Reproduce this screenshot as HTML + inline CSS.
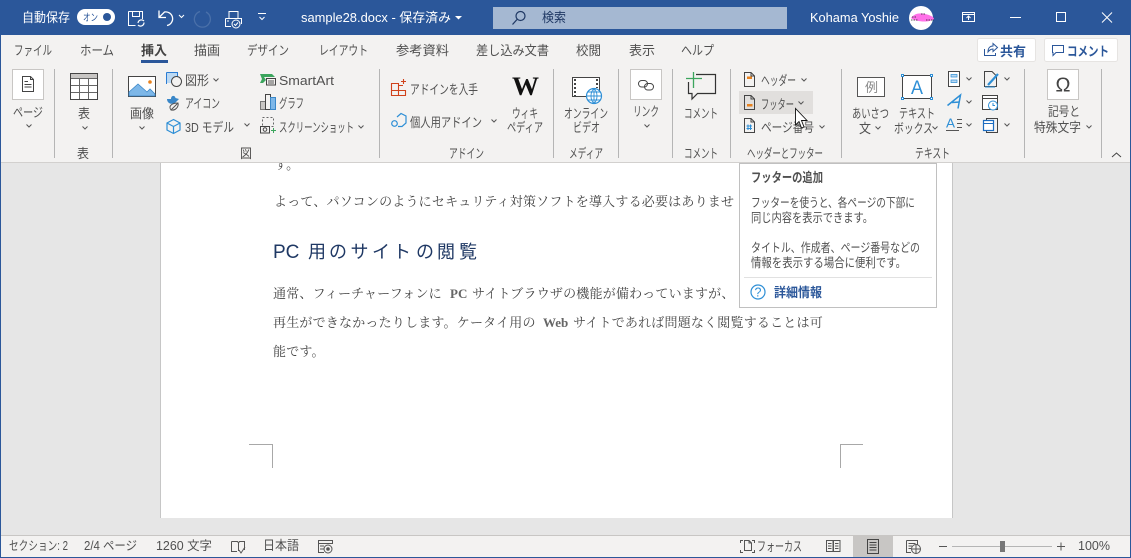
<!DOCTYPE html>
<html lang="ja"><head><meta charset="utf-8"><title>sample28.docx - Word</title>
<style>
html,body{margin:0;padding:0;background:#e6e6e6;overflow:hidden}
svg{display:block}
text{font-family:"Liberation Sans","Noto Sans CJK JP",sans-serif;font-size:13px;fill:#505050}
.w text,text.w{fill:#fff}
.m text{font-family:"Liberation Serif","Noto Serif CJK SC","Noto Serif CJK JP",serif;font-size:13px;letter-spacing:.2px;fill:#444}
.m tspan.e{font-weight:700;fill:#666;letter-spacing:0}
.i{fill:none;stroke:#444;stroke-width:1}
.c{fill:none;stroke:#555;stroke-width:1}
.b{fill:none;stroke:#2e8fd6;stroke-width:1.2}
.s{fill:#b5b5b5}
</style></head><body>
<svg xmlns="http://www.w3.org/2000/svg" width="1131" height="558" viewBox="0 0 1131 558">
<defs><path id="chev" d="M-2.500-1.500L0 1 2.500-1.500" fill="none" stroke="#555" stroke-width="1"/></defs>
<rect width="1131" height="558" fill="#e6e6e6"/>
<!-- document -->
<rect x="161" y="160" width="791" height="358" fill="#fff"/>
<path d="M160.500 160V518M952.500 160V518" stroke="#c6c6c6" fill="none"/>
<g class="m">
<text x="274" y="169">す。</text>
<text x="274" y="206">よって、パソコンのようにセキュリティ対策ソフトを導入する必要はありませ</text>
<text y="298"><tspan x="273">通常、フィーチャーフォンに</tspan><tspan class="e" x="450">PC</tspan><tspan x="472">サイトブラウザの機能が備わっていますが、</tspan></text>
<text y="327"><tspan x="273">再生ができなかったりします。ケータイ用の</tspan><tspan class="e" x="543">Web</tspan><tspan x="573">サイトであれば問題なく閲覧することは可</tspan></text>
<text x="273" y="356">能です。</text>
</g>
<text y="258" style="fill:#1f3864;font-size:18px"><tspan x="273" style="font-size:19px">PC</tspan><tspan x="308">用</tspan><tspan x="329">の</tspan><tspan x="350.500">サ</tspan><tspan x="372">イ</tspan><tspan x="393">ト</tspan><tspan x="416">の</tspan><tspan x="437">閲</tspan><tspan x="459">覧</tspan></text>
<path d="M249 444.500H272.500V468M863 444.500H840.500V468" fill="none" stroke="#a8a8a8"/>
<!-- title bar -->
<rect width="1131" height="35" fill="#2b579a"/>
<!-- ribbon -->
<rect x="1" y="35" width="1129" height="127" fill="#f3f2f1"/>
<rect x="1" y="162" width="1129" height="1" fill="#d2d0ce"/>
<rect x="0" y="35" width="1" height="523" fill="#2b579a"/><rect x="1130" y="35" width="1" height="523" fill="#2b579a"/>
<g class="w">
<text x="22" y="22" textLength="48" lengthAdjust="spacingAndGlyphs">自動保存</text>
<text x="301" y="22" textLength="150" lengthAdjust="spacingAndGlyphs">sample28.docx - 保存済み</text>
<text x="810" y="22" textLength="89" lengthAdjust="spacingAndGlyphs">Kohama Yoshie</text>
</g>
<rect x="77" y="9" width="38" height="16" rx="8" fill="#fff"/>
<text x="83" y="21" textLength="15" lengthAdjust="spacingAndGlyphs" style="font-size:10px;fill:#2b579a">オン</text>
<circle cx="107" cy="17" r="4" fill="#2b579a"/>
<g fill="none" stroke="#fff" stroke-width="1">
<path d="M128.500 11.500H142.500V19M128.500 11.500V25.500H135.500M132.500 11.500V16.500H139.500V11.500"/>
<path d="M138 23A3.500 3.500 0 0 1 144 21M144 22.500A3.500 3.500 0 0 1 138 25" stroke-width="1.200"/>
<path d="M159 10.500V17.500H166M159 17.500L164.500 12A6.500 6.500 0 1 1 167 25.500" stroke-width="1.300"/>
<path d="M179 15l2.500 2.500 2.500-2.500M259.500 17l2.500 2.500 2.500-2.500M258 13.500h8"/>
<path d="M229 18V11.500H238V18M225.500 18.500H241.500V24M225.500 18.500V26.500H231M229 21H227"/>
</g>
<circle cx="236" cy="24" r="4" fill="#2b579a" stroke="#fff"/>
<path d="M234 24l1.500 1.500 2.500-3" fill="none" stroke="#fff"/>
<path d="M200 11.500A8 8 0 1 0 206 12" fill="none" stroke="#4a70a9" stroke-width="1.300"/>
<path d="M455 16h7l-3.500 3.500z" fill="#fff"/>
<rect x="493" y="7" width="294" height="22" fill="#a5b8d2"/>
<circle cx="520.500" cy="16" r="4.500" fill="none" stroke="#1f3864" stroke-width="1.200"/><path d="M517 19.500L512.500 24.500" stroke="#1f3864" stroke-width="1.300"/>
<text x="542" y="22" textLength="24" lengthAdjust="spacingAndGlyphs" style="fill:#1f3864">検索</text>
<circle cx="921" cy="18" r="12" fill="#fff"/>
<path d="M911 18C914 14 919 12.500 925 14C930 15 934 17 934 19C929 23 916 22 911 18Z" fill="#ff70e8"/>
<path d="M911 20H918M926 20H934M921 14H926M912 17H916" stroke="#222" stroke-width=".8" stroke-dasharray="1.500 1" fill="none"/>
<g fill="none" stroke="#fff" stroke-width="1">
<rect x="962.500" y="12.500" width="12" height="9"/><path d="M962.500 14.500H974.500M968.500 20V16.500M966.500 18L968.500 16L970.500 18"/>
<path d="M1010 17.500H1021"/><rect x="1056.500" y="12.500" width="9" height="9"/>
<path d="M1102 12.500L1112 22.500M1112 12.500L1102 22.500"/>
</g>
<!-- tabs -->
<g>
<text x="14" y="55" textLength="38" lengthAdjust="spacingAndGlyphs">ファイル</text>
<text x="80" y="55" textLength="34" lengthAdjust="spacingAndGlyphs">ホーム</text>
<text x="141" y="55" textLength="26" lengthAdjust="spacingAndGlyphs" style="font-weight:700;fill:#444">挿入</text>
<text x="194" y="55" textLength="26" lengthAdjust="spacingAndGlyphs">描画</text>
<text x="247" y="55" textLength="42" lengthAdjust="spacingAndGlyphs">デザイン</text>
<text x="319" y="55" textLength="49" lengthAdjust="spacingAndGlyphs">レイアウト</text>
<text x="396" y="55" textLength="53" lengthAdjust="spacingAndGlyphs">参考資料</text>
<text x="476" y="55" textLength="73" lengthAdjust="spacingAndGlyphs">差し込み文書</text>
<text x="576" y="55" textLength="25" lengthAdjust="spacingAndGlyphs">校閲</text>
<text x="629" y="55" textLength="26" lengthAdjust="spacingAndGlyphs">表示</text>
<text x="681" y="55" textLength="33" lengthAdjust="spacingAndGlyphs">ヘルプ</text>
</g>
<rect x="141" y="60" width="27" height="3" fill="#2b579a"/>
<rect x="977.500" y="38.500" width="58" height="23" rx="2" fill="#fff" stroke="#e6e4e2"/>
<rect x="1044.500" y="38.500" width="73" height="23" rx="2" fill="#fff" stroke="#e6e4e2"/>
<path d="M984.500 49V55.500H995.500V53M988 52C988 47 991 46 993 46V43.500L997.500 47.500L993 51.500V49C991 49 989.500 50 988 52Z" fill="none" stroke="#2b579a"/>
<text x="1000" y="56" textLength="26" lengthAdjust="spacingAndGlyphs" style="font-weight:700;fill:#2b579a">共有</text>
<path d="M1052.500 45.500H1063.500V52.500H1056L1053 55.500V52.500H1052.500Z" fill="none" stroke="#2b579a"/>
<text x="1067" y="56" textLength="42" lengthAdjust="spacingAndGlyphs" style="font-weight:700;fill:#2b579a">コメント</text>
<!-- separators -->
<path class="s" d="M54 69h1v89h-1zM112 69h1v89h-1zM379 69h1v89h-1zM553 69h1v89h-1zM618 69h1v89h-1zM672 69h1v89h-1zM730 69h1v89h-1zM841 69h1v89h-1zM1024 69h1v89h-1zM1101 69h1v89h-1z"/>
<!-- page -->
<rect x="12.500" y="69.500" width="31" height="30" fill="#fff" stroke="#c8c6c4"/>
<path class="i" d="M22.500 76.500H30.500L33.500 79.500V91.500H22.500ZM30.500 76.500V79.500H33.500M24.500 81.500H28M24.500 84.500H31.500M24.500 87H31.500"/>
<text x="13" y="117" textLength="30" lengthAdjust="spacingAndGlyphs">ページ</text><use href="#chev" x="29" y="126"/>
<!-- table -->
<rect x="70.500" y="73.500" width="27" height="26" fill="#fff" stroke="#444"/>
<rect x="71" y="74" width="26" height="4.500" fill="#c8c6c4"/>
<path d="M71 78.500H97M71 85.500H97M71 92.500H97M79.500 78V99M88.500 78V99" stroke="#666" fill="none"/>
<text x="78" y="118" textLength="12" lengthAdjust="spacingAndGlyphs">表</text><use href="#chev" x="85" y="128"/>
<text x="77" y="158" textLength="12" lengthAdjust="spacingAndGlyphs">表</text>
<!-- picture -->
<rect x="128.500" y="76.500" width="27" height="20" fill="#fff" stroke="#444"/>
<path d="M129 96V92L138 84L147 92L150 89L155 94V96Z" fill="#7db7e8" stroke="#3a87c8" stroke-width=".8"/>
<circle cx="150" cy="82" r="1.800" fill="#e8821e"/>
<text x="130" y="118" textLength="24" lengthAdjust="spacingAndGlyphs">画像</text><use href="#chev" x="142" y="128"/>
<!-- shapes -->
<path d="M166.500 72.500H177.500V77M166.500 72.500V84" fill="none" stroke="#2b7cd3"/><rect x="167" y="73" width="10" height="10" fill="#bcd9f3"/>
<circle cx="176.500" cy="81.500" r="5" fill="#f3f2f1" stroke="#444"/>
<text x="185" y="85" textLength="24" lengthAdjust="spacingAndGlyphs">図形</text><use href="#chev" x="216" y="80"/>
<path d="M167 99C167 103 171 105 175 103L179 99L175.500 98C175 95 171 95 171 99Z" fill="#3a87c8"/>
<path d="M171 110L178 103M171 110C168 106 172 103 178 103C179 107 175 111 171 110Z" fill="none" stroke="#555"/>
<text x="185" y="108" textLength="35" lengthAdjust="spacingAndGlyphs">アイコン</text>
<path class="b" d="M173.500 119.500L180 123V130L173.500 133.500L167 130V123ZM167 123L173.500 126.500L180 123M173.500 126.500V133.500"/>
<text x="185" y="132" textLength="49" lengthAdjust="spacingAndGlyphs">3D モデル</text><use href="#chev" x="247" y="125"/>
<!-- smartart -->
<path d="M260 74H272L275 77H264L266 80L263 83H260L262 79Z" fill="#3ba55d"/>
<rect x="266.500" y="78.500" width="9" height="6.500" fill="#f3f2f1" stroke="#444"/><path d="M268 81h6M268 83h6" stroke="#555"/>
<text x="279" y="85" textLength="55" lengthAdjust="spacingAndGlyphs">SmartArt</text>
<rect x="260.500" y="101.500" width="5" height="8" fill="#c8c6c4" stroke="#777"/><rect x="265.500" y="94.500" width="5" height="15" fill="#f3f2f1" stroke="#444"/><rect x="270.500" y="97.500" width="5" height="12" fill="#7db7e8" stroke="#3a87c8"/>
<text x="279" y="108" textLength="25" lengthAdjust="spacingAndGlyphs">グラフ</text>
<rect x="262.500" y="117.500" width="11" height="9" fill="none" stroke="#666" stroke-dasharray="2 2"/>
<rect x="260.500" y="126.500" width="9" height="6.500" fill="#f3f2f1" stroke="#444"/><circle cx="265" cy="129.500" r="1.800" fill="none" stroke="#444"/>
<path d="M271 130.500h5M273.500 128v5" stroke="#3ba55d"/>
<text x="279" y="132" textLength="75" lengthAdjust="spacingAndGlyphs">スクリーンショット</text><use href="#chev" x="361" y="127"/>
<text x="240" y="158" textLength="12" lengthAdjust="spacingAndGlyphs">図</text>
<!-- add-ins -->
<path d="M391.500 83.500H398.500V90.500H391.500ZM391.500 90.500H398.500V95.500H391.500ZM398.500 90.500H405.500V95.500H398.500ZM398.500 90.500V85.500H403M401 81.500H406M403.500 79V84" fill="none" stroke="#d0421b" stroke-width="1.100"/>
<text x="410" y="94" textLength="68" lengthAdjust="spacingAndGlyphs">アドインを入手</text>
<path class="b" d="M397 117L401 113.500L406 116V123L402 126.500H398"/><circle cx="394.500" cy="123.500" r="2.800" class="b"/>
<text x="410" y="127" textLength="72" lengthAdjust="spacingAndGlyphs">個人用アドイン</text><use href="#chev" x="494" y="121"/>
<text x="512" y="95" style="font-family:'Liberation Serif',serif;font-size:26px;font-weight:700;fill:#111" textLength="27" lengthAdjust="spacingAndGlyphs">W</text>
<text x="512" y="118" textLength="26" lengthAdjust="spacingAndGlyphs">ウィキ</text>
<text x="507" y="132" textLength="36" lengthAdjust="spacingAndGlyphs">ペディア</text>
<text x="449" y="158" textLength="35" lengthAdjust="spacingAndGlyphs">アドイン</text>
<!-- media -->
<rect x="572.500" y="77.500" width="27" height="19" fill="#fff" stroke="#444"/>
<path d="M575 79V96M597 79V88" stroke="#444" stroke-width="2" stroke-dasharray="2 2" fill="none"/>
<circle cx="594" cy="96" r="7.500" fill="#fff" stroke="#2e8fd6" stroke-width="1.200"/>
<path d="M586.500 96H601.500M594 88.500V103.500M588 92H600M588 100H600M594 88.500C590 92 590 100 594 103.500M594 88.500C598 92 598 100 594 103.500" fill="none" stroke="#2e8fd6" stroke-width=".9"/>
<text x="564" y="118" textLength="44" lengthAdjust="spacingAndGlyphs">オンライン</text>
<text x="573" y="132" textLength="27" lengthAdjust="spacingAndGlyphs">ビデオ</text>
<text x="569" y="158" textLength="34" lengthAdjust="spacingAndGlyphs">メディア</text>
<!-- link -->
<rect x="630.500" y="69.500" width="31" height="30" fill="#fff" stroke="#c8c6c4"/>
<rect x="638.500" y="80.500" width="9" height="6.500" rx="3.200" fill="none" stroke="#444"/><rect x="644.500" y="83.500" width="9" height="6.500" rx="3.200" fill="none" stroke="#444"/>
<text x="633" y="116" textLength="26" lengthAdjust="spacingAndGlyphs">リンク</text><use href="#chev" x="647" y="126"/>
<!-- comment -->
<path d="M688.500 82V93.500H692V99L697.500 93.500H715.500V74.500H696" fill="none" stroke="#333" stroke-width="1.200"/>
<path d="M686 78.500H702M693.500 72V88" stroke="#3ba55d" stroke-width="1.300"/>
<text x="684" y="118" textLength="34" lengthAdjust="spacingAndGlyphs">コメント</text>
<text x="684" y="158" textLength="34" lengthAdjust="spacingAndGlyphs">コメント</text>
<!-- header/footer -->
<rect x="739" y="91" width="74" height="23" fill="#e1dfdd"/>
<path class="i" d="M744.500 72.500H751L754.500 76V86.500H744.500ZM751 72.500V76H754.500"/><rect x="747" y="76.500" width="5" height="2.500" fill="#e8821e"/>
<text x="761" y="85" textLength="35" lengthAdjust="spacingAndGlyphs">ヘッダー</text><use href="#chev" x="804" y="80"/>
<path class="i" d="M744.500 95.500H751L754.500 99V109.500H744.500ZM751 95.500V99H754.500"/><rect x="747" y="104" width="5.500" height="2.500" fill="#e8821e"/>
<text x="761" y="109" textLength="33" lengthAdjust="spacingAndGlyphs">フッター</text><use href="#chev" x="801" y="103"/>
<path class="i" d="M744.500 118.500H751L754.500 122V132.500H744.500ZM751 118.500V122H754.500"/>
<path d="M748 124.500V130M750.500 124.500V130M746.500 126H752M746.500 128.500H752" stroke="#2e8fd6" fill="none"/>
<text x="761" y="132" textLength="53" lengthAdjust="spacingAndGlyphs">ページ番号</text><use href="#chev" x="822" y="127"/>
<text x="747" y="158" textLength="76" lengthAdjust="spacingAndGlyphs">ヘッダーとフッター</text>
<!-- text group -->
<rect x="857.500" y="77.500" width="27" height="19" fill="#fff" stroke="#555"/>
<text x="865" y="92" textLength="13" lengthAdjust="spacingAndGlyphs" style="fill:#8a8a8a">例</text>
<text x="852" y="118" textLength="37" lengthAdjust="spacingAndGlyphs">あいさつ</text>
<text x="859" y="133" textLength="12" lengthAdjust="spacingAndGlyphs">文</text><use href="#chev" x="878" y="128"/>
<rect x="902.500" y="75.500" width="29" height="23" fill="#fff" stroke="#444"/>
<path d="M901.500 74.500h2v2h-2zM930.500 74.500h2v2h-2zM901.500 97.500h2v2h-2zM930.500 97.500h2v2h-2z" fill="#fff" stroke="#2e8fd6"/>
<text x="911" y="94" textLength="12" lengthAdjust="spacingAndGlyphs" style="font-size:19px;fill:#2e8fd6">A</text>
<text x="899" y="118" textLength="36" lengthAdjust="spacingAndGlyphs">テキスト</text>
<text x="894" y="133" textLength="39" lengthAdjust="spacingAndGlyphs">ボックス</text><use href="#chev" x="935" y="128"/>
<text x="915" y="158" textLength="35" lengthAdjust="spacingAndGlyphs">テキスト</text>
<rect x="948.500" y="71.500" width="11" height="15" fill="#fff" stroke="#444"/><path d="M951 74.500h6v2.500h-6zM951 80h6v2.500h-6z" fill="#bcd9f3" stroke="#2e8fd6" stroke-width=".7"/>
<use href="#chev" x="969" y="79"/>
<path d="M947.500 105.500L960.500 95L958 108.500M952 102.500L960 102" fill="none" stroke="#2e8fd6" stroke-width="1.500"/><use href="#chev" x="969" y="102"/>
<text x="946" y="127.500" textLength="9" lengthAdjust="spacingAndGlyphs" style="fill:#2e8fd6;font-size:13px">A</text>
<path d="M946 130.500H959M957 119.500H962M957 123.500H962M957 127.500H962" stroke="#555" fill="none"/><use href="#chev" x="969" y="125"/>
<path class="i" d="M984.500 71.500H992L996.500 76V86.500H984.500Z"/><path d="M988 85L998 74" stroke="#2e8fd6" stroke-width="2.200"/><path d="M985 87H995" stroke="#2e8fd6"/><use href="#chev" x="1007" y="79"/>
<rect x="982.500" y="95.500" width="15" height="14" fill="#fff" stroke="#444"/><path d="M982.500 98.500H997.500" stroke="#444"/><circle cx="993" cy="105.500" r="4.500" fill="#fff" stroke="#2e8fd6"/><path d="M993 103V105.500H995" stroke="#2e8fd6" fill="none"/>
<rect x="986.500" y="118.500" width="11" height="14" fill="none" stroke="#444"/><rect x="983.500" y="120.500" width="10" height="10" fill="#fff" stroke="#1c6cc0" stroke-width="1.200"/><path d="M983.500 123.500H993.500" stroke="#1c6cc0"/><use href="#chev" x="1007" y="125"/>
<!-- symbol -->
<rect x="1047.500" y="69.500" width="31" height="30" fill="#fff" stroke="#c8c6c4"/>
<text x="1055.500" y="91.500" textLength="15" lengthAdjust="spacingAndGlyphs" style="font-size:20px;fill:#444">Ω</text>
<text x="1048" y="116" textLength="32" lengthAdjust="spacingAndGlyphs">記号と</text>
<text x="1034" y="132" textLength="47" lengthAdjust="spacingAndGlyphs">特殊文字</text><use href="#chev" x="1089" y="127"/>
<path d="M1112 157L1116.500 153L1121 157" fill="none" stroke="#444"/>
<!-- tooltip -->
<rect x="739.500" y="163.500" width="197" height="144" fill="#fff" stroke="#c0c0c0"/>
<text x="751" y="182" textLength="72" lengthAdjust="spacingAndGlyphs" style="font-weight:700;fill:#505050">フッターの追加</text>
<text x="751" y="207" textLength="164" lengthAdjust="spacingAndGlyphs" style="font-size:12.500px">フッターを使うと、各ページの下部に</text>
<text x="751" y="222" textLength="122" lengthAdjust="spacingAndGlyphs" style="font-size:12.500px">同じ内容を表示できます。</text>
<text x="751" y="252" textLength="169" lengthAdjust="spacingAndGlyphs" style="font-size:12.500px">タイトル、作成者、ページ番号などの</text>
<text x="751" y="267" textLength="155" lengthAdjust="spacingAndGlyphs" style="font-size:12.500px">情報を表示する場合に便利です。</text>
<path d="M744 277.500H932" stroke="#e1e1e1"/>
<circle cx="758" cy="292" r="7" fill="#fff" stroke="#2e8fd6" stroke-width="1.200"/>
<text x="754.500" y="296.500" style="font-size:12.500px;fill:#2e8fd6">?</text>
<text x="774" y="297" textLength="48" lengthAdjust="spacingAndGlyphs" style="font-weight:700;fill:#2b579a">詳細情報</text>
<!-- cursor -->
<path d="M795.500 108.500V125L799 121.500L801.500 128L804 127L801.500 120.500H807Z" fill="#fff" stroke="#111" stroke-width=".9"/>
<!-- status bar -->
<rect x="1" y="535" width="1129" height="1" fill="#c8c6c4"/>
<rect x="1" y="536" width="1129" height="21" fill="#f3f2f1"/>
<rect x="0" y="557" width="1131" height="1" fill="#2b579a"/>
<rect x="853" y="536" width="40" height="21" fill="#c8c6c4"/>
<g>
<text x="9" y="550" textLength="59" lengthAdjust="spacingAndGlyphs" style="font-size:12.500px">セクション: 2</text>
<text x="84" y="550" textLength="53" lengthAdjust="spacingAndGlyphs" style="font-size:12.500px">2/4 ページ</text>
<text x="156" y="550" textLength="56" lengthAdjust="spacingAndGlyphs" style="font-size:12.500px">1260 文字</text>
<text x="263" y="550" textLength="36" lengthAdjust="spacingAndGlyphs">日本語</text>
<text x="757" y="551" textLength="45" lengthAdjust="spacingAndGlyphs">フォーカス</text>
<text x="1078" y="550" textLength="32" lengthAdjust="spacingAndGlyphs">100%</text>
</g>
<path class="c" d="M231.500 541.500H237.500L238.500 543L239.500 541.500H244.500V550M231.500 541.500V551.500H237M238.500 543V551M239 550L241 553L245 547"/>
<path class="c" d="M318.500 540.500H332.500V543.500H318.500ZM318.500 543.500V552.500H324M320 546H324M320 549H324"/><circle cx="328" cy="549" r="4" fill="#f3f2f1" stroke="#555"/><circle cx="328" cy="549" r="1.800" fill="#555"/>
<path class="c" d="M740.500 543V540.500H743M752 540.500H754.500V543M740.500 550V552.500H743M752 552.500H754.500V550M744.500 540.500H749L751.500 543V550.500H744.500ZM749 540.500V543H751.500"/>
<path class="c" d="M826.500 540.500H833V551.500H826.500ZM833.500 540.500H840V551.500H833.500ZM828 543.500H831.500M828 546H831.500M835 543.500H838.500M835 546H838.500M828 548.500H831.500M835 548.500H838.500"/>
<path d="M867.500 539.500H878.500V553.500H867.500ZM869.500 542.500H876.500M869.500 545H876.500M869.500 547.500H876.500M869.500 550H876.500" fill="none" stroke="#444"/>
<path class="c" d="M906.500 540.500H917.500V545M906.500 540.500V552.500H911M908.500 543.500H915.500M908.500 546H912M908.500 548.500H911"/><circle cx="916" cy="549" r="4.500" fill="#f3f2f1" stroke="#555"/><path d="M911.500 549H920.500M916 544.500V553.500" stroke="#555"/>
<path d="M939 546.500H947M1057 546.500H1065M1061 542.500V550.500" stroke="#555" fill="none"/>
<path d="M952 546.500H1052" stroke="#b5b5b5"/>
<rect x="1000" y="541" width="5" height="11" fill="#777"/>
</svg>
</body></html>
